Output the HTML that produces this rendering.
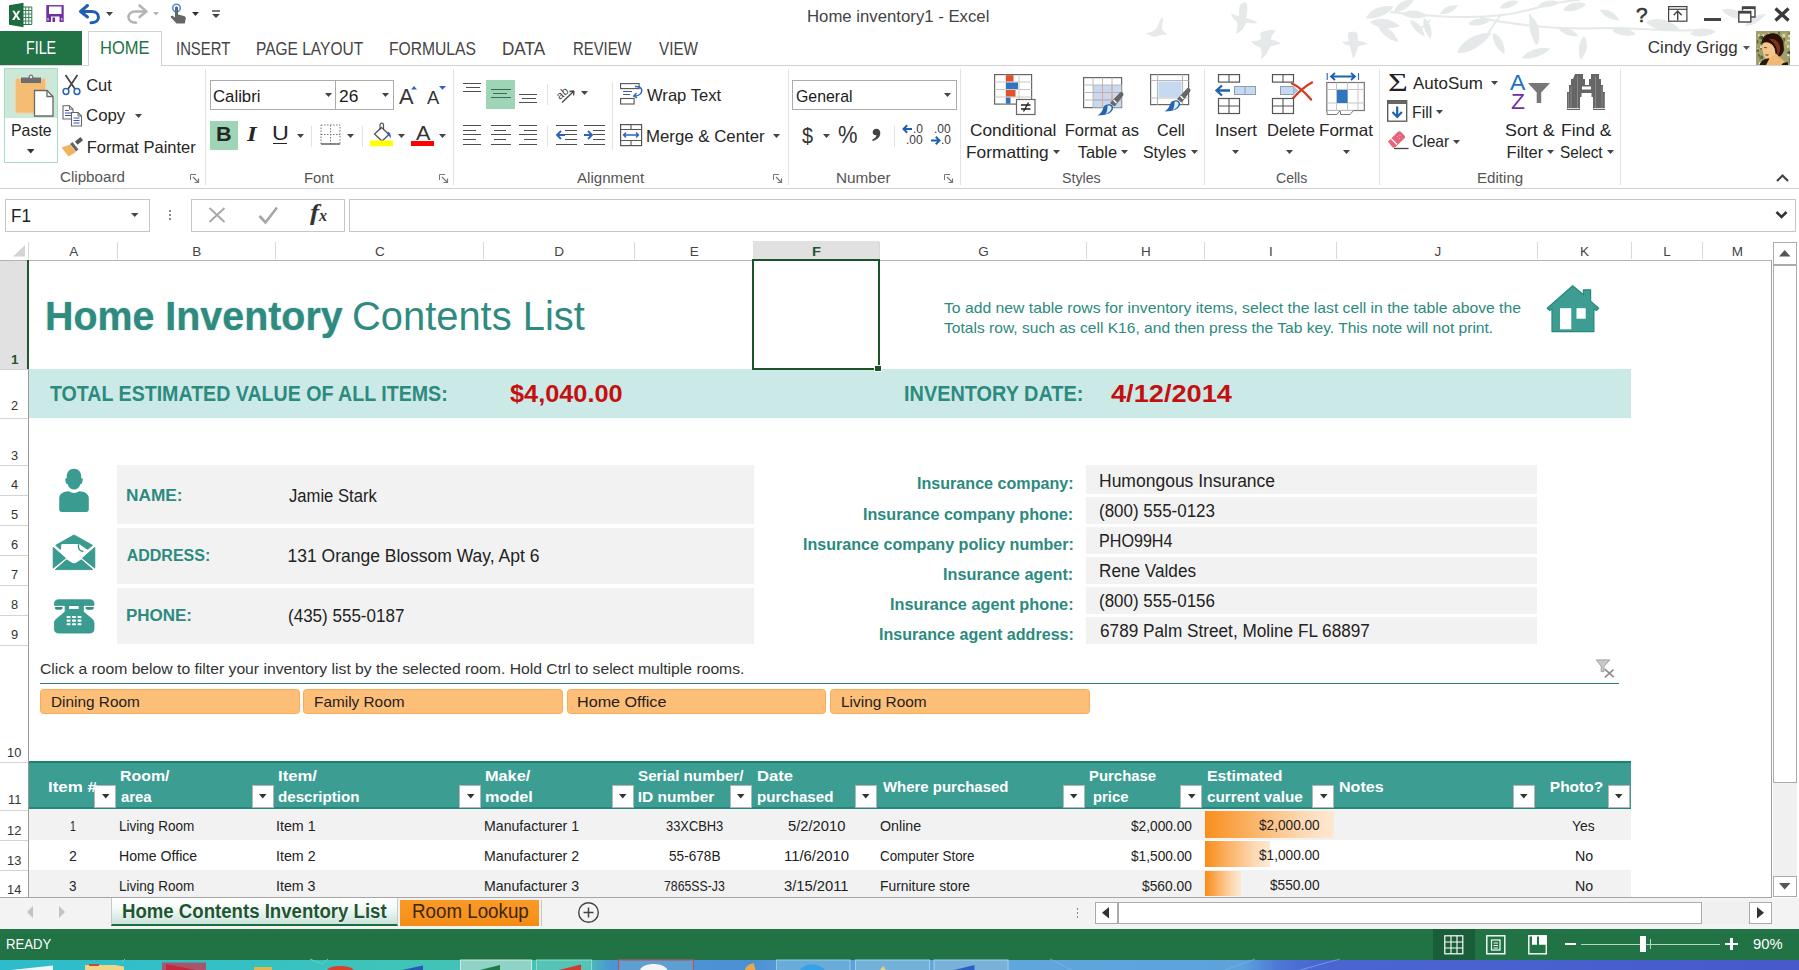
<!DOCTYPE html>
<html>
<head>
<meta charset="utf-8">
<title>Home inventory1 - Excel</title>
<style>
*{box-sizing:border-box;margin:0;padding:0}
html,body{width:1799px;height:970px;overflow:hidden;background:#fff}
body{font-family:"Liberation Sans",sans-serif;color:#262626;position:relative}
.a{position:absolute;display:block}
.t{position:absolute;white-space:nowrap;line-height:1;transform-origin:0 50%}
svg{overflow:visible}
</style>
</head>
<body>
<div class="a" style="left:0px;top:0px;width:1799px;height:66px;background:#fff;"></div>
<svg class="a" style="left:1100px;top:0px;overflow:hidden" width="699" height="66" viewBox="0 0 699 66"><g fill="#e6e9e9"><path d="M57 28c2-6 4-10 6-11c0 5-1 9-1 13c2 2 4 3 5 5c-3 0-6-1-9 1c-4 2-7 0-13-3c5 0 9-2 12-5z"/>
<path d="M140 5c3-3 6-4 7-1c1 4 0 10-1 14c3 1 8 2 12 5c-5 1-9 0-12 0c-2 5-5 9-10 11c1-5 2-9 1-12c-3-2-5-5-6-9c3 2 6 3 8 3c0-4 0-8 1-11z"/>
<path d="M160 33c5-3 12-4 16-2c-3 2-5 5-5 9c3 0 7 1 10 4c-4 1-8 1-11 3c-2 5-4 9-9 12c1-5 1-9-1-12c-4-1-7-3-9-6c4 0 8 0 10-2c0-2 0-4-1-6z"/>
<path d="M248 33c3-2 6-2 9 0c1 3 1 6 1 8c3 0 7 1 10 3c-4 1-7 1-10 2c-1 5-2 9-5 13c-1-5-2-9-3-13c-3-1-6-2-8-4c3 0 5-1 7-1c-1-3-1-5-1-8z"/><path transform="translate(266 18) rotate(-22)" d="M0 0C7.5 -7.0 21.0 -6.3 30 0C21.0 4.9 7.5 5.6 0 0z"/><path transform="translate(270 22) rotate(8)" d="M0 0C7.5 -7.0 21.0 -6.3 30 0C21.0 4.9 7.5 5.6 0 0z"/><path transform="translate(278 26) rotate(38)" d="M0 0C6.5 -6.0 18.2 -5.4 26 0C18.2 4.2 6.5 4.8 0 0z"/><path transform="translate(294 12) rotate(-32)" d="M0 0C6.0 -6.0 16.8 -5.4 24 0C16.8 4.2 6.0 4.8 0 0z"/><path transform="translate(302 14) rotate(4)" d="M0 0C6.5 -6.0 18.2 -5.4 26 0C18.2 4.2 6.5 4.8 0 0z"/><path transform="translate(310 20) rotate(48)" d="M0 0C5.5 -5.0 15.4 -4.5 22 0C15.4 3.5 5.5 4.0 0 0z"/><path transform="translate(324 18) rotate(72)" d="M0 0C5.5 -5.0 15.4 -4.5 22 0C15.4 3.5 5.5 4.0 0 0z"/><path transform="translate(357 53) rotate(-30)" d="M0 0C10.0 -9.0 28.0 -8.1 40 0C28.0 6.3 10.0 7.2 0 0z"/><path transform="translate(393 33) rotate(62)" d="M0 0C6.0 -6.0 16.8 -5.4 24 0C16.8 4.2 6.0 4.8 0 0z"/><path transform="translate(368 24) rotate(-8)" d="M0 0C5.5 -5.0 15.4 -4.5 22 0C15.4 3.5 5.5 4.0 0 0z"/><path transform="translate(340 14) rotate(-25)" d="M0 0C5.0 -5.0 14.0 -4.5 20 0C14.0 3.5 5.0 4.0 0 0z"/><path transform="translate(431 16) rotate(78)" d="M0 0C7.5 -7.0 21.0 -6.3 30 0C21.0 4.9 7.5 5.6 0 0z"/><path transform="translate(422 58) rotate(-18)" d="M0 0C7.5 -6.0 21.0 -5.4 30 0C21.0 4.2 7.5 4.8 0 0z"/><path transform="translate(458 28) rotate(22)" d="M0 0C5.5 -5.0 15.4 -4.5 22 0C15.4 3.5 5.5 4.0 0 0z"/><path transform="translate(484 36) rotate(98)" d="M0 0C6.0 -6.0 16.8 -5.4 24 0C16.8 4.2 6.0 4.8 0 0z"/><path transform="translate(463 10) rotate(-14)" d="M0 0C6.0 -6.0 16.8 -5.4 24 0C16.8 4.2 6.0 4.8 0 0z"/><path transform="translate(500 10) rotate(28)" d="M0 0C5.5 -5.0 15.4 -4.5 22 0C15.4 3.5 5.5 4.0 0 0z"/><path transform="translate(438 6) rotate(-10)" d="M0 0C5.5 -5.0 15.4 -4.5 22 0C15.4 3.5 5.5 4.0 0 0z"/><path transform="translate(400 8) rotate(-20)" d="M0 0C5.0 -5.0 14.0 -4.5 20 0C14.0 3.5 5.0 4.0 0 0z"/><path transform="translate(512 30) rotate(10)" d="M0 0C6.0 -6.0 16.8 -5.4 24 0C16.8 4.2 6.0 4.8 0 0z"/><path transform="translate(546 22) rotate(12)" d="M0 0C8.5 -8.0 23.8 -7.2 34 0C23.8 5.6 8.5 6.4 0 0z"/><path transform="translate(590 34) rotate(-5)" d="M0 0C6.5 -6.0 18.2 -5.4 26 0C18.2 4.2 6.5 4.8 0 0z"/><path transform="translate(622 10) rotate(20)" d="M0 0C6.5 -6.0 18.2 -5.4 26 0C18.2 4.2 6.5 4.8 0 0z"/><path transform="translate(645 26) rotate(-30)" d="M0 0C6.0 -5.0 16.8 -4.5 24 0C16.8 3.5 6.0 4.0 0 0z"/></g>
<g fill="none" stroke="#e6e9e9" stroke-width="2"><path d="M290 12c40 4 80 8 120 2c30-6 50-14 70-14M380 18c40 8 80 12 130 10c30 0 60 4 90 2M330 20c-4 6-8 8-14 10M400 16c-6 8-10 14-12 18M430 14c0 10 2 20 6 30"/></g></svg>
<div class="t" style="left:807.36px;top:8px;font-size:16.5px;color:#444;transform:scaleX(1.0148);">Home inventory1 - Excel</div>
<svg class="a" style="left:5px;top:2px;" width="28" height="26" viewBox="0 0 28 26"><path d="M17.500 5h9.300v17.500H17.500z" fill="#fff" stroke="#2a7a4d" stroke-width="1"/>
<path d="M17.500 8.500h9.300M17.500 12h9.300M17.500 15.500h9.300M17.500 19h9.300M20.700 5v17.500M23.800 5v17.500" stroke="#2a7a4d" stroke-width=".900"/>
<path d="M18.500 .800v24.400L4 22.700V3.300z" fill="#1d6b3f"/>
<path d="M7.300 8.800h2.300l1.700 3 1.700-3h2.300l-2.800 4.500 2.900 4.700h-2.400l-1.800-3.200-1.800 3.200H7l2.900-4.700z" fill="#fff"/></svg>
<svg class="a" style="left:45px;top:4px;" width="20" height="20" viewBox="0 0 20 20"><rect x="1.300" y="1.100" width="17.400" height="16.900" fill="#7030a0"/><rect x="4" y="2.500" width="12.500" height="7.500" fill="#fff"/><rect x="6" y="12.500" width="8.500" height="5.500" fill="#fff"/><rect x="7.500" y="13.500" width="2.600" height="4.500" fill="#7030a0"/><rect x="2.300" y="14" width="1.500" height="2.500" fill="#c9a8e0"/><rect x="16" y="14" width="1.500" height="2.500" fill="#c9a8e0"/></svg>
<svg class="a" style="left:78px;top:3px;" width="24" height="22" viewBox="0 0 24 22"><path d="M9.5 2.5L2.5 8.5l7 5.5" fill="none" stroke="#1e5fb4" stroke-width="3" stroke-linecap="round" stroke-linejoin="round"/><path d="M3.5 8.5h10c4.5 0 7 2.600 7 5.800s-3 5.400-7.500 5.400" fill="none" stroke="#1e5fb4" stroke-width="3" stroke-linecap="round"/></svg>
<svg class="a" style="left:105.50px;top:12.00px" width="7" height="4" viewBox="0 0 7 4"><path d="M0 0H7L3.5 4Z" fill="#444"/></svg>
<svg class="a" style="left:125px;top:3px;" width="24" height="22" viewBox="0 0 24 22"><path d="M14.500 2.500l7 6-7 5.500" fill="none" stroke="#b4b4b4" stroke-width="2.6" stroke-linecap="round" stroke-linejoin="round"/><path d="M20.500 8.500h-10c-4.500 0-7 2.600-7 5.800s3 5.400 7.500 5.400" fill="none" stroke="#b4b4b4" stroke-width="2.6" stroke-linecap="round"/></svg>
<svg class="a" style="left:153.00px;top:12.25px" width="6" height="3.5" viewBox="0 0 6 3.5"><path d="M0 0H6L3.0 3.5Z" fill="#b4b4b4"/></svg>
<svg class="a" style="left:167px;top:2px;" width="22" height="24" viewBox="0 0 22 24"><circle cx="9.500" cy="6" r="3.800" fill="none" stroke="#4a8fe0" stroke-width="1.600"/><path d="M8 5.500c0-1.200 3-1.200 3 0v7l6 1.500c1.500.400 2 1.500 1.700 3l-.9 4.500H9.500L4 15.500c-.8-1 .3-2.300 1.500-1.700L8 15.500z" fill="#666"/></svg>
<svg class="a" style="left:191.50px;top:12.00px" width="7" height="4" viewBox="0 0 7 4"><path d="M0 0H7L3.5 4Z" fill="#333"/></svg>
<svg class="a" style="left:211px;top:9px;" width="10" height="10" viewBox="0 0 10 10"><path d="M1 2h8" stroke="#444" stroke-width="1.400"/><path d="M1 5h8L5 9z" fill="#444"/></svg>
<div class="t" style="left:1636.07px;top:6px;font-size:19.5px;color:#3a3a3a;transform:scaleX(1.0684);-webkit-text-stroke:.600px #3a3a3a;">?</div>
<svg class="a" style="left:1668px;top:6px;" width="20" height="16" viewBox="0 0 20 16"><rect x=".600" y=".600" width="18.300" height="14.600" fill="#fff" stroke="#444" stroke-width="1.200"/><path d="M.600 3.300h18.300" stroke="#444" stroke-width="1.200"/><path d="M9.700 14.500V5M5.700 9.200L9.700 5l4 4.200" fill="none" stroke="#444" stroke-width="1.400"/></svg>
<div class="a" style="left:1704px;top:18px;width:17px;height:3px;background:#444;"></div>
<svg class="a" style="left:1738px;top:5.5px;" width="18" height="17" viewBox="0 0 18 17"><path d="M4.500 4.500V1h12.500v10H13" fill="none" stroke="#444" stroke-width="1.400"/><path d="M4.500 2h12.500" stroke="#444" stroke-width="2.200"/><rect x=".800" y="5.500" width="12" height="10.500" fill="#fff" stroke="#444" stroke-width="1.400"/><path d="M.800 6.500h12" stroke="#444" stroke-width="2.200"/></svg>
<svg class="a" style="left:1774px;top:7px;" width="16" height="15" viewBox="0 0 16 15"><path d="M1.500 1.500l13 12M14.500 1.500l-13 12" stroke="#3a3a3a" stroke-width="3.300"/></svg>
<div class="a" style="left:0px;top:65px;width:1799px;height:1px;background:#d2d2d2;"></div>
<div class="a" style="left:0px;top:31px;width:82px;height:34px;background:#217346;"></div>
<div class="a" style="left:88px;top:31px;width:74px;height:35px;background:#fff;border:1px solid #d2d2d2;border-bottom:none"></div>
<div class="t" style="left:25.96px;top:40px;font-size:17.5px;color:#fff;transform:scaleX(0.8126);">FILE</div>
<div class="t" style="left:99.88px;top:40px;font-size:17.5px;color:#217346;transform:scaleX(0.9425);">HOME</div>
<div class="t" style="left:175.76px;top:41px;font-size:17.5px;color:#444;transform:scaleX(0.8491);">INSERT</div>
<div class="t" style="left:255.86px;top:41px;font-size:17.5px;color:#444;transform:scaleX(0.8861);">PAGE LAYOUT</div>
<div class="t" style="left:389.15px;top:41px;font-size:17.5px;color:#444;transform:scaleX(0.8937);">FORMULAS</div>
<div class="t" style="left:502.33px;top:41px;font-size:17.5px;color:#444;transform:scaleX(0.9786);">DATA</div>
<div class="t" style="left:572.51px;top:41px;font-size:17.5px;color:#444;transform:scaleX(0.8486);">REVIEW</div>
<div class="t" style="left:658.70px;top:41px;font-size:17.5px;color:#444;transform:scaleX(0.8722);">VIEW</div>
<div class="t" style="left:1647.85px;top:39px;font-size:17px;color:#333;">Cindy Grigg</div>
<svg class="a" style="left:1743.00px;top:45.50px" width="7" height="4" viewBox="0 0 7 4"><path d="M0 0H7L3.5 4Z" fill="#555"/></svg>
<svg class="a" style="left:1756px;top:31px;overflow:hidden" width="34" height="34" viewBox="0 0 34 34"><rect width="34" height="34" fill="#a39f6c"/><rect x="10.7" y="5.0" width="1.3" height="2.8" fill="#2f5e2f"/><rect x="12.1" y="1.9" width="1.3" height="2.6" fill="#e8e0b4"/><rect x="2.3" y="3.0" width="1.3" height="2.9" fill="#f0ecd0"/><rect x="31.3" y="20.8" width="2.2" height="2.5" fill="#2f5e2f"/><rect x="32.2" y="1.5" width="1.7" height="1.9" fill="#6f7a45"/><rect x="3.9" y="10.2" width="1.4" height="2.9" fill="#6f7a45"/><rect x="6.2" y="3.2" width="2.2" height="3.0" fill="#d9d2a6"/><rect x="16.4" y="17.5" width="2.0" height="3.8" fill="#c2b77a"/><rect x="11.9" y="8.2" width="2.5" height="2.1" fill="#6f7a45"/><rect x="19.0" y="17.3" width="2.5" height="2.2" fill="#c2b77a"/><rect x="32.3" y="3.9" width="1.5" height="2.4" fill="#f0ecd0"/><rect x="30.8" y="13.9" width="2.6" height="2.9" fill="#d9d2a6"/><rect x="28.9" y="10.4" width="2.3" height="2.9" fill="#c2b77a"/><rect x="15.1" y="27.7" width="2.1" height="3.2" fill="#3f6a3a"/><rect x="2.0" y="23.1" width="1.7" height="2.5" fill="#59663a"/><rect x="22.1" y="0.7" width="1.8" height="3.0" fill="#59663a"/><rect x="16.3" y="7.2" width="1.4" height="2.1" fill="#3f6a3a"/><rect x="12.9" y="28.8" width="1.5" height="2.5" fill="#d9d2a6"/><rect x="9.2" y="4.5" width="2.8" height="2.2" fill="#f0ecd0"/><rect x="13.7" y="11.8" width="2.9" height="1.9" fill="#f0ecd0"/><rect x="5.8" y="7.7" width="1.2" height="3.6" fill="#e8e0b4"/><rect x="6.0" y="9.3" width="2.0" height="2.4" fill="#6f7a45"/><rect x="18.7" y="31.5" width="2.0" height="3.7" fill="#2f5e2f"/><rect x="31.4" y="22.5" width="1.9" height="2.5" fill="#f0ecd0"/><rect x="15.9" y="13.2" width="1.3" height="2.0" fill="#e8e0b4"/><rect x="5.4" y="11.2" width="1.4" height="2.9" fill="#2f5e2f"/><rect x="17.7" y="31.3" width="1.3" height="2.0" fill="#2f5e2f"/><rect x="12.4" y="20.9" width="2.3" height="2.7" fill="#c2b77a"/><rect x="3.8" y="16.1" width="2.1" height="2.3" fill="#59663a"/><rect x="4.8" y="24.7" width="2.1" height="3.2" fill="#3f6a3a"/><rect x="17.0" y="6.8" width="1.5" height="2.9" fill="#c2b77a"/><rect x="0.9" y="17.4" width="2.5" height="2.2" fill="#d9d2a6"/><rect x="12.1" y="5.5" width="2.2" height="3.4" fill="#e8e0b4"/><rect x="10.9" y="7.4" width="2.7" height="3.5" fill="#e8e0b4"/><rect x="24.4" y="7.5" width="1.8" height="1.6" fill="#59663a"/><rect x="0.9" y="9.2" width="1.5" height="3.0" fill="#3f6a3a"/><rect x="11.4" y="26.7" width="2.9" height="2.4" fill="#c2b77a"/><rect x="7.3" y="7.5" width="1.8" height="2.7" fill="#e8e0b4"/><rect x="32.5" y="20.1" width="2.1" height="3.1" fill="#2f5e2f"/><rect x="26.4" y="2.8" width="2.8" height="3.5" fill="#d9d2a6"/><rect x="24.8" y="15.8" width="2.0" height="3.1" fill="#6f7a45"/><rect x="2.9" y="31.2" width="2.0" height="3.4" fill="#f0ecd0"/><rect x="2.8" y="5.2" width="1.2" height="3.0" fill="#6f7a45"/><rect x="15.4" y="21.6" width="2.4" height="2.4" fill="#59663a"/><rect x="18.1" y="4.3" width="2.6" height="3.3" fill="#2f5e2f"/><rect x="3.4" y="24.7" width="2.0" height="3.7" fill="#6f7a45"/><rect x="27.3" y="7.0" width="1.6" height="2.8" fill="#3f6a3a"/><rect x="25.2" y="10.8" width="2.7" height="1.7" fill="#f0ecd0"/><rect x="24.4" y="29.6" width="2.7" height="3.7" fill="#f0ecd0"/><rect x="4.3" y="5.0" width="2.8" height="3.4" fill="#2f5e2f"/><rect x="20.1" y="25.6" width="1.5" height="2.7" fill="#6f7a45"/><rect x="23.9" y="18.4" width="2.4" height="2.8" fill="#c2b77a"/><rect x="15.9" y="25.6" width="1.6" height="2.2" fill="#2f5e2f"/><rect x="25.5" y="16.8" width="2.6" height="3.8" fill="#2f5e2f"/><rect x="14.6" y="20.2" width="2.4" height="2.6" fill="#e8e0b4"/><rect x="17.6" y="15.8" width="2.5" height="3.7" fill="#e8e0b4"/><rect x="31.1" y="8.6" width="2.7" height="1.8" fill="#e8e0b4"/><rect x="4.0" y="14.6" width="2.4" height="2.6" fill="#d9d2a6"/><rect x="7.0" y="10.0" width="2.8" height="1.9" fill="#d9d2a6"/><rect x="23.6" y="21.8" width="1.7" height="1.8" fill="#6f7a45"/><rect x="15.4" y="24.6" width="1.9" height="2.7" fill="#d9d2a6"/><rect x="32.7" y="27.5" width="2.5" height="4.0" fill="#6f7a45"/><rect x="13.3" y="13.9" width="1.8" height="3.3" fill="#c2b77a"/><rect x="0.6" y="18.3" width="2.5" height="2.5" fill="#59663a"/><rect x="17.1" y="9.7" width="1.4" height="3.8" fill="#d9d2a6"/><rect x="7.5" y="28.9" width="1.7" height="1.6" fill="#d9d2a6"/><rect x="25.7" y="8.9" width="2.7" height="3.6" fill="#6f7a45"/><rect x="22.3" y="31.2" width="1.5" height="3.8" fill="#f0ecd0"/><rect x="18.8" y="23.1" width="1.7" height="3.5" fill="#d9d2a6"/><rect x="6.1" y="29.5" width="2.9" height="3.1" fill="#3f6a3a"/>
<path d="M5.500 13.500C5 5 12 1.500 18 2.300c7 .900 9.500 7 9.700 13.200c.300 6-1.500 9-5.200 10.500L19 22c.500-7-5-12.500-13.500-8.500z" fill="#2b0f08"/>
<path d="M13 8c5-1 10 2 11 8c.500 4-.500 7-2.500 8.500c0-8-3-13-8.500-16.500z" fill="#7a351a"/>
<path d="M6.500 12.500c5-3.500 12 .500 12.800 8.500c.400 4-2 6.500-5.500 7c-3.500.500-5.500-1-6.300-4.500c-1-4-1.800-8-1-11z" fill="#f2c68c"/>
<path d="M8 16.500l3 .300M9.500 23.500c1 .800 2 .800 3 .300" stroke="#8a3a22" stroke-width="1.100" fill="none"/>
<path d="M13.500 27.500L20 22.500l4 4c3 3 6 4.500 7 7.500H8c.500-3 3.500-4.500 5.500-6.500z" fill="#f1b873"/>
<path d="M3.500 34c1-4 5-6.200 10-6.800L10 34zM25.500 34c1-2 3.500-3 6.500-2.500V34z" fill="#231812"/></svg>
<div class="a" style="left:0px;top:66px;width:1799px;height:122px;background:#fff;"></div>
<div class="a" style="left:0px;top:188px;width:1799px;height:1px;background:#d2d2d2;"></div>
<div class="a" style="left:0px;top:189px;width:1799px;height:52px;background:#fff;"></div>
<div class="a" style="left:205px;top:69px;width:1px;height:116px;background:#e2e2e2;"></div>
<div class="a" style="left:453px;top:69px;width:1px;height:116px;background:#e2e2e2;"></div>
<div class="a" style="left:788px;top:69px;width:1px;height:116px;background:#e2e2e2;"></div>
<div class="a" style="left:960px;top:69px;width:1px;height:116px;background:#e2e2e2;"></div>
<div class="a" style="left:1204px;top:69px;width:1px;height:116px;background:#e2e2e2;"></div>
<div class="a" style="left:1379px;top:69px;width:1px;height:116px;background:#e2e2e2;"></div>
<div class="a" style="left:1620px;top:69px;width:1px;height:116px;background:#e2e2e2;"></div>
<svg class="a" style="left:190px;top:173.5px;" width="9" height="9" viewBox="0 0 9 9"><path d="M.500 6V.500H6" fill="none" stroke="#777" stroke-width="1"/><path d="M3 3l5 5M8.500 4.500v4h-4" fill="none" stroke="#777" stroke-width="1.200"/></svg>
<svg class="a" style="left:438.5px;top:173.5px;" width="9" height="9" viewBox="0 0 9 9"><path d="M.500 6V.500H6" fill="none" stroke="#777" stroke-width="1"/><path d="M3 3l5 5M8.500 4.500v4h-4" fill="none" stroke="#777" stroke-width="1.200"/></svg>
<svg class="a" style="left:772.8px;top:173.5px;" width="9" height="9" viewBox="0 0 9 9"><path d="M.500 6V.500H6" fill="none" stroke="#777" stroke-width="1"/><path d="M3 3l5 5M8.500 4.500v4h-4" fill="none" stroke="#777" stroke-width="1.200"/></svg>
<svg class="a" style="left:944.1px;top:173.5px;" width="9" height="9" viewBox="0 0 9 9"><path d="M.500 6V.500H6" fill="none" stroke="#777" stroke-width="1"/><path d="M3 3l5 5M8.500 4.500v4h-4" fill="none" stroke="#777" stroke-width="1.200"/></svg>
<div class="t" style="left:59.94px;top:169px;font-size:15.5px;color:#555;transform:scaleX(0.9778);">Clipboard</div>
<div class="t" style="left:304.41px;top:170px;font-size:15.5px;color:#555;transform:scaleX(0.9577);">Font</div>
<div class="t" style="left:577.00px;top:170px;font-size:15.5px;color:#555;transform:scaleX(0.9739);">Alignment</div>
<div class="t" style="left:835.67px;top:170px;font-size:15.5px;color:#555;transform:scaleX(0.9887);">Number</div>
<div class="t" style="left:1062.46px;top:170px;font-size:15.5px;color:#555;transform:scaleX(0.9171);">Styles</div>
<div class="t" style="left:1276.30px;top:170px;font-size:15.5px;color:#555;transform:scaleX(0.9074);">Cells</div>
<div class="t" style="left:1477.49px;top:170px;font-size:15.5px;color:#555;transform:scaleX(0.9760);">Editing</div>
<svg class="a" style="left:1775px;top:172px;" width="15" height="11" viewBox="0 0 15 11"><path d="M2 9l5.500-5.500L13 9" fill="none" stroke="#444" stroke-width="2.200"/></svg>
<div class="a" style="left:4px;top:68px;width:54px;height:95px;border:1px solid #a9dcc0;background:#fff"></div>
<div class="a" style="left:5px;top:69px;width:52px;height:49px;background:#cbe8d8;"></div>
<svg class="a" style="left:14px;top:73px;" width="42" height="45" viewBox="0 0 42 45"><rect x="1.500" y="5.500" width="30" height="34.500" rx="1.500" fill="#f4bd73"/><rect x="1.500" y="5.500" width="30" height="34.500" rx="1.500" fill="none" stroke="#f8d19b" stroke-width="1"/>
<path d="M7 4.500h7.500c0-4 5-4 5 0H27V10H7z" fill="#6e6e6e"/><circle cx="17" cy="4" r="1.300" fill="#e8e8e8"/>
<path d="M20.500 17.500h12.500l6 6V43H20.500z" fill="#fff" stroke="#6a6a6a" stroke-width="1.300"/><path d="M33 17.500v6h6" fill="none" stroke="#6a6a6a" stroke-width="1.300"/></svg>
<div class="t" style="left:11.03px;top:122px;font-size:16.5px;color:#262626;transform:scaleX(0.9632);">Paste</div>
<svg class="a" style="left:26.55px;top:149.45px" width="7.5" height="4.5" viewBox="0 0 7.5 4.5"><path d="M0 0H7.5L3.75 4.5Z" fill="#333"/></svg>
<svg class="a" style="left:61px;top:74px;" width="21" height="22" viewBox="0 0 21 22"><path d="M4.500 1l9.500 14M16.500 1L7 15" stroke="#444" stroke-width="1.700" fill="none"/><circle cx="5" cy="17.500" r="2.900" fill="none" stroke="#2b63b8" stroke-width="1.500"/><circle cx="16" cy="17.500" r="2.900" fill="none" stroke="#2b63b8" stroke-width="1.500"/></svg>
<div class="t" style="left:86.17px;top:77px;font-size:16.5px;color:#262626;">Cut</div>
<svg class="a" style="left:62px;top:105px;" width="21" height="22" viewBox="0 0 21 22"><path d="M1 .700h6.500l3.500 3.500V14H1z" fill="#fff" stroke="#666" stroke-width="1.100"/><path d="M7.500 .700v3.500H11" fill="none" stroke="#666" stroke-width="1"/><path d="M3 5.500h4M3 8h6M3 10.500h6" stroke="#3b55b8" stroke-width="1.100"/>
<path d="M9.500 7.500h6.500l3.500 3.500V21H9.500z" fill="#fff" stroke="#666" stroke-width="1.100"/><path d="M16 7.500V11h3.500" fill="none" stroke="#666" stroke-width="1"/><path d="M11.500 13h6M11.500 15.500h6M11.500 18h6" stroke="#3b55b8" stroke-width="1.100"/></svg>
<div class="t" style="left:86.16px;top:107px;font-size:16.5px;color:#262626;transform:scaleX(1.0185);">Copy</div>
<svg class="a" style="left:134.70px;top:114.00px" width="7" height="4" viewBox="0 0 7 4"><path d="M0 0H7L3.5 4Z" fill="#444"/></svg>
<svg class="a" style="left:61px;top:136px;" width="23" height="21" viewBox="0 0 23 21"><path d="M14 5.500l5.500-4.500 2.500 3.200-5.500 4.500z" fill="#555"/><path d="M11.500 6l6 7.500-2.500 2-6-7.500z" fill="#666"/><path d="M9 8.500l6 7.500-7.500 4.500L.500 11.500z" fill="#f0b45e"/></svg>
<div class="t" style="left:86.68px;top:139px;font-size:16.5px;color:#262626;">Format Painter</div>
<div class="a" style="left:210px;top:80px;width:126px;height:30px;border:1px solid #ababab;background:#fff"></div>
<div class="a" style="left:335px;top:80px;width:59px;height:30px;border:1px solid #ababab;background:#fff"></div>
<div class="t" style="left:212.56px;top:88px;font-size:17px;color:#1a1a1a;transform:scaleX(0.9858);">Calibri</div>
<svg class="a" style="left:324.90px;top:92.80px" width="7" height="4" viewBox="0 0 7 4"><path d="M0 0H7L3.5 4Z" fill="#444"/></svg>
<div class="t" style="left:339.03px;top:88px;font-size:17px;color:#1a1a1a;transform:scaleX(1.0208);">26</div>
<svg class="a" style="left:382.00px;top:92.80px" width="7" height="4" viewBox="0 0 7 4"><path d="M0 0H7L3.5 4Z" fill="#444"/></svg>
<div class="t" style="left:399.10px;top:87px;font-size:21.5px;color:#333;transform:scaleX(1.0142);">A</div>
<svg class="a" style="left:411px;top:85.5px;" width="6" height="4" viewBox="0 0 6 4"><path d="M0 3.500L3 0l3 3.500z" fill="#2b63b8"/></svg>
<div class="t" style="left:427.40px;top:90px;font-size:17.5px;color:#333;transform:scaleX(1.0483);">A</div>
<svg class="a" style="left:438.5px;top:85.5px;" width="7" height="4" viewBox="0 0 7 4"><path d="M0 0h7L3.500 3.700z" fill="#2b63b8"/></svg>
<div class="a" style="left:210px;top:121px;width:28px;height:29px;background:#9fd5b7;"></div>
<div class="t" style="left:216.29px;top:124px;font-size:20.5px;color:#262626;font-weight:bold;transform:scaleX(1.0549);">B</div>
<div class="t" style="left:246.65px;top:124px;font-size:21px;color:#262626;font-weight:bold;font-style:italic;font-family:'Liberation Serif',serif;transform:scaleX(1.1849);">I</div>
<div class="t" style="left:271.65px;top:124px;font-size:19.5px;color:#262626;transform:scaleX(1.1966);">U</div>
<div class="a" style="left:272.5px;top:142.5px;width:14.5px;height:1.5px;background:#262626;"></div>
<svg class="a" style="left:296.90px;top:133.60px" width="7" height="4" viewBox="0 0 7 4"><path d="M0 0H7L3.5 4Z" fill="#444"/></svg>
<div class="a" style="left:311px;top:126px;width:1px;height:21px;background:#e2e2e2;"></div>
<svg class="a" style="left:320px;top:124px;" width="21" height="21" viewBox="0 0 21 21"><rect x="1" y="1" width="19" height="19" fill="none" stroke="#777" stroke-width="1" stroke-dasharray="1.500 1.500"/><path d="M10.500 1v19M1 10.500h19" stroke="#777" stroke-width="1" stroke-dasharray="1.500 1.500"/><path d="M1 20h19" stroke="#666" stroke-width="1.400"/></svg>
<svg class="a" style="left:347.40px;top:133.60px" width="7" height="4" viewBox="0 0 7 4"><path d="M0 0H7L3.5 4Z" fill="#444"/></svg>
<div class="a" style="left:362px;top:126px;width:1px;height:21px;background:#e2e2e2;"></div>
<svg class="a" style="left:370px;top:122px;" width="24" height="25" viewBox="0 0 24 25"><path d="M11.500 5.500l7.500 7-7 6.500-7.500-7z" fill="#fff" stroke="#555" stroke-width="1.300"/><path d="M10 8V3c0-2.500 3.500-2.500 3.500 0v4" fill="none" stroke="#555" stroke-width="1.200"/><path d="M18 9.500c2.500 1.500 3.500 4 2.500 7c-1-2-1.700-3.500-3.500-4.500z" fill="#2b63b8"/><rect x="0" y="18.500" width="23" height="5.700" fill="#ffff00"/></svg>
<svg class="a" style="left:398.10px;top:133.60px" width="7" height="4" viewBox="0 0 7 4"><path d="M0 0H7L3.5 4Z" fill="#444"/></svg>
<div class="t" style="left:415.80px;top:123px;font-size:20px;color:#333;transform:scaleX(1.0827);">A</div>
<div class="a" style="left:411px;top:140.5px;width:23px;height:5.7px;background:#ff0000;"></div>
<svg class="a" style="left:438.90px;top:133.60px" width="7" height="4" viewBox="0 0 7 4"><path d="M0 0H7L3.5 4Z" fill="#444"/></svg>
<div class="a" style="left:463px;top:83px;width:18px;height:1px;background:#4f4f4f;"></div>
<div class="a" style="left:466px;top:87px;width:14px;height:1px;background:#4f4f4f;"></div>
<div class="a" style="left:463px;top:91px;width:18px;height:1px;background:#4f4f4f;"></div>
<div class="a" style="left:486px;top:80px;width:28.5px;height:29px;background:#9fd5b7;"></div>
<div class="a" style="left:491px;top:89px;width:20px;height:1px;background:#3d6b50;"></div>
<div class="a" style="left:493px;top:93px;width:14px;height:1px;background:#3d6b50;"></div>
<div class="a" style="left:491px;top:97px;width:20px;height:1px;background:#3d6b50;"></div>
<div class="a" style="left:519px;top:94px;width:18px;height:1px;background:#4f4f4f;"></div>
<div class="a" style="left:522px;top:98px;width:14px;height:1px;background:#4f4f4f;"></div>
<div class="a" style="left:519px;top:102px;width:18px;height:1px;background:#4f4f4f;"></div>
<div class="a" style="left:546.5px;top:84px;width:1px;height:21px;background:#e2e2e2;"></div>
<svg class="a" style="left:556px;top:85px;" width="21" height="19" viewBox="0 0 21 19"><text x="1" y="11" font-family="Liberation Sans" font-size="11" fill="#444" transform="rotate(-38 8 9)">ab</text><path d="M6 17.500L18 6M18 6l-4.500.500M18 6l-.500 4.500" fill="none" stroke="#444" stroke-width="1.300"/></svg>
<svg class="a" style="left:580.70px;top:91.30px" width="7" height="4" viewBox="0 0 7 4"><path d="M0 0H7L3.5 4Z" fill="#444"/></svg>
<div class="a" style="left:612px;top:82px;width:1px;height:68px;background:#e2e2e2;"></div>
<svg class="a" style="left:620px;top:83px;" width="24" height="23" viewBox="0 0 24 23"><rect x=".600" y=".600" width="18.500" height="5" fill="#fff" stroke="#555" stroke-width="1.100"/><rect x=".600" y="15.500" width="13.500" height="5.500" fill="#fff" stroke="#555" stroke-width="1.100"/><path d="M3 8.500h9M3 11.500h7" stroke="#3b55b8" stroke-width="1.200"/><path d="M15 3.500c6-.500 8 3 6 6.500c-1.500 2.500-4 3-7 3M16.500 10l-2.800 3 3.300 2" fill="none" stroke="#2b63b8" stroke-width="1.400"/></svg>
<div class="t" style="left:647.00px;top:87px;font-size:16.5px;color:#262626;transform:scaleX(1.0056);">Wrap Text</div>
<div class="a" style="left:463px;top:125px;width:18px;height:1px;background:#4f4f4f;"></div>
<div class="a" style="left:463px;top:130px;width:13px;height:1px;background:#4f4f4f;"></div>
<div class="a" style="left:463px;top:134px;width:18px;height:1px;background:#4f4f4f;"></div>
<div class="a" style="left:463px;top:139px;width:13px;height:1px;background:#4f4f4f;"></div>
<div class="a" style="left:463px;top:144px;width:18px;height:1px;background:#4f4f4f;"></div>
<div class="a" style="left:491px;top:125px;width:20px;height:1px;background:#4f4f4f;"></div>
<div class="a" style="left:494px;top:130px;width:12px;height:1px;background:#4f4f4f;"></div>
<div class="a" style="left:491px;top:134px;width:20px;height:1px;background:#4f4f4f;"></div>
<div class="a" style="left:494px;top:139px;width:12px;height:1px;background:#4f4f4f;"></div>
<div class="a" style="left:491px;top:144px;width:20px;height:1px;background:#4f4f4f;"></div>
<div class="a" style="left:519px;top:125px;width:18px;height:1px;background:#4f4f4f;"></div>
<div class="a" style="left:524px;top:130px;width:13px;height:1px;background:#4f4f4f;"></div>
<div class="a" style="left:519px;top:134px;width:18px;height:1px;background:#4f4f4f;"></div>
<div class="a" style="left:524px;top:139px;width:13px;height:1px;background:#4f4f4f;"></div>
<div class="a" style="left:519px;top:144px;width:18px;height:1px;background:#4f4f4f;"></div>
<div class="a" style="left:546.5px;top:126px;width:1px;height:21px;background:#e2e2e2;"></div>
<div class="a" style="left:556px;top:125px;width:21px;height:1px;background:#4f4f4f;"></div>
<div class="a" style="left:565px;top:130px;width:12px;height:1px;background:#4f4f4f;"></div>
<div class="a" style="left:565px;top:134px;width:12px;height:1px;background:#4f4f4f;"></div>
<div class="a" style="left:565px;top:139px;width:12px;height:1px;background:#4f4f4f;"></div>
<div class="a" style="left:556px;top:144px;width:21px;height:1px;background:#4f4f4f;"></div>
<svg class="a" style="left:555.5px;top:130px;" width="9" height="10" viewBox="0 0 9 10"><path d="M9 5H1.500M5 1L1 5l4 4" fill="none" stroke="#2b63b8" stroke-width="1.800"/></svg>
<div class="a" style="left:584px;top:125px;width:21px;height:1px;background:#4f4f4f;"></div>
<div class="a" style="left:593px;top:130px;width:12px;height:1px;background:#4f4f4f;"></div>
<div class="a" style="left:593px;top:134px;width:12px;height:1px;background:#4f4f4f;"></div>
<div class="a" style="left:593px;top:139px;width:12px;height:1px;background:#4f4f4f;"></div>
<div class="a" style="left:584px;top:144px;width:21px;height:1px;background:#4f4f4f;"></div>
<svg class="a" style="left:583.6px;top:130px;" width="9" height="10" viewBox="0 0 9 10"><path d="M0 5h7.500M4 1l4 4-4 4" fill="none" stroke="#2b63b8" stroke-width="1.800"/></svg>
<svg class="a" style="left:620px;top:124px;" width="23" height="23" viewBox="0 0 23 23"><rect x=".600" y=".600" width="21" height="21" fill="#fff" stroke="#555" stroke-width="1.200"/><path d="M.600 5.500h21M.600 16.500h21M11 .600v5M11 16.500v5" stroke="#555" stroke-width="1.100"/><path d="M3.500 11h15M6 8.500L3.500 11 6 13.500M16 8.500l2.500 2.500-2.500 2.500" fill="none" stroke="#2b63b8" stroke-width="1.300"/></svg>
<div class="t" style="left:645.65px;top:128px;font-size:16.5px;color:#262626;transform:scaleX(1.0189);">Merge &amp; Center</div>
<svg class="a" style="left:773.30px;top:134.40px" width="7" height="4" viewBox="0 0 7 4"><path d="M0 0H7L3.5 4Z" fill="#444"/></svg>
<div class="a" style="left:792px;top:80px;width:165px;height:30px;border:1px solid #ababab;background:#fff"></div>
<div class="t" style="left:795.61px;top:88px;font-size:17px;color:#1a1a1a;transform:scaleX(0.9340);">General</div>
<svg class="a" style="left:944.30px;top:92.70px" width="7" height="4" viewBox="0 0 7 4"><path d="M0 0H7L3.5 4Z" fill="#444"/></svg>
<div class="t" style="left:802.00px;top:125px;font-size:22.5px;color:#333;transform:scaleX(0.8806);">$</div>
<svg class="a" style="left:823.30px;top:133.60px" width="7" height="4" viewBox="0 0 7 4"><path d="M0 0H7L3.5 4Z" fill="#444"/></svg>
<div class="t" style="left:838.13px;top:124px;font-size:23px;color:#333;transform:scaleX(0.9544);">%</div>
<svg class="a" style="left:871px;top:127.5px;" width="10" height="14" viewBox="0 0 10 14"><path d="M5.500 .800c2.300 0 3.800 1.700 3.800 4.200c0 3.800-2.800 6.800-7.600 8l-.600-1.300c2.600-1 4.200-2.600 4.400-4.400c-2.200.300-3.800-1-3.800-3c0-2 1.600-3.500 3.800-3.500z" fill="#444"/></svg>
<div class="a" style="left:894px;top:126px;width:1px;height:21px;background:#e2e2e2;"></div>
<svg class="a" style="left:902px;top:123px;" width="23" height="23" viewBox="0 0 23 23"><path d="M10 6H2M5.200 2.300L1.500 6l3.700 3.700" fill="none" stroke="#1e5fb4" stroke-width="2"/><text x="11" y="10" font-family="Liberation Sans" font-size="12" fill="#3a3a3a">.0</text><text x="4" y="21.400" font-family="Liberation Sans" font-size="12" fill="#3a3a3a">.00</text></svg>
<svg class="a" style="left:930px;top:123px;" width="23" height="23" viewBox="0 0 23 23"><text x="4" y="10" font-family="Liberation Sans" font-size="12" fill="#3a3a3a">.00</text><path d="M1 17.500h8M5.800 13.800l3.700 3.700-3.700 3.700" fill="none" stroke="#1e5fb4" stroke-width="2"/><text x="11" y="21.400" font-family="Liberation Sans" font-size="12" fill="#3a3a3a">.0</text></svg>
<svg class="a" style="left:994px;top:74px;" width="43" height="42" viewBox="0 0 43 42"><rect x=".600" y=".600" width="37" height="29.500" fill="#fff" stroke="#666" stroke-width="1.200"/>
<path d="M.600 8h37M.600 15.500h37M.600 23h37M12 .600v29.500M25 .600v29.500" stroke="#c9c9c9" stroke-width="1"/>
<rect x="12" y="1.200" width="7.500" height="6.300" fill="#e2512c"/><rect x="12" y="8.500" width="12" height="6.500" fill="#2f75c0"/><rect x="12" y="16" width="9.500" height="6.500" fill="#e2512c"/><rect x="12" y="23.500" width="4.500" height="6.200" fill="#2f75c0"/>
<rect x="22.500" y="25.500" width="18.500" height="15" fill="#fff" stroke="#666" stroke-width="1.200"/><path d="M27 31h9.500M27 35h9.500M34.500 28.500l-5 9" stroke="#222" stroke-width="1.300"/></svg>
<div class="t" style="left:970.44px;top:122px;font-size:16.5px;color:#262626;transform:scaleX(1.0473);">Conditional</div>
<div class="t" style="left:965.92px;top:144px;font-size:16.5px;color:#262626;transform:scaleX(1.0489);">Formatting</div>
<svg class="a" style="left:1053.00px;top:150.00px" width="7" height="4" viewBox="0 0 7 4"><path d="M0 0H7L3.5 4Z" fill="#444"/></svg>
<svg class="a" style="left:1083px;top:77px;" width="44" height="40" viewBox="0 0 44 40"><rect x=".600" y=".600" width="38" height="30" fill="#fff" stroke="#666" stroke-width="1.200"/><rect x="10" y="8" width="28.500" height="22.500" fill="#c5d9f1"/>
<path d="M.600 8h38M.600 15.500h38M.600 23h38M10 .600v30M19.500 .600v30M29 .600v30" stroke="#b9b9b9" stroke-width="1"/><path d="M10 15.500h28M10 23h28M19.500 8v22M29 8v22" stroke="#d9a79a" stroke-width="1"/><path d="M27 26l10-10.500c1.500-1.500 4.500.800 3.200 3l-8.500 11z" fill="#666"/><path d="M30.5 23l3 3" stroke="#fff" stroke-width="1.500"/><path d="M24.5 27.5c3-1 6 1 5.500 4c-.500 4-6 7-15.500 7c3-2 5-4.500 5.500-7c.500-2.500 2-3.500 4.500-4z" fill="#2565b0"/><path d="M24.5 29c2-1 4.500 0 4 2.500c-.500 2.500-3 4.500-6 5.500c1.500-2 2-4.500 2-8z" fill="#dfeaf7"/></svg>
<div class="t" style="left:1064.68px;top:122px;font-size:16.5px;color:#262626;">Format as</div>
<div class="t" style="left:1077.67px;top:144px;font-size:16.5px;color:#262626;">Table</div>
<svg class="a" style="left:1120.80px;top:150.00px" width="7" height="4" viewBox="0 0 7 4"><path d="M0 0H7L3.5 4Z" fill="#444"/></svg>
<svg class="a" style="left:1150px;top:74px;" width="44" height="41" viewBox="0 0 44 41"><rect x=".600" y=".600" width="38" height="30" fill="#fff" stroke="#666" stroke-width="1.200"/><path d="M.600 6.500h38M.600 24h38M7.500 .600v30M32.500 .600v30" stroke="#b9b9b9" stroke-width="1.200"/><rect x="8.500" y="7.500" width="23" height="15.500" fill="#c5d9f1"/><path d="M27 25l10-10.500c1.500-1.500 4.500.800 3.200 3l-8.500 11z" fill="#666"/><path d="M30.5 22l3 3" stroke="#fff" stroke-width="1.500"/><path d="M24.5 26.5c3-1 6 1 5.500 4c-.500 4-6 7-15.500 7c3-2 5-4.500 5.500-7c.500-2.500 2-3.500 4.500-4z" fill="#2565b0"/><path d="M24.5 28c2-1 4.500 0 4 2.500c-.500 2.500-3 4.500-6 5.500c1.500-2 2-4.500 2-8z" fill="#dfeaf7"/></svg>
<div class="t" style="left:1156.89px;top:122px;font-size:16.5px;color:#262626;transform:scaleX(0.9825);">Cell</div>
<div class="t" style="left:1143.29px;top:144px;font-size:16.5px;color:#262626;transform:scaleX(0.9601);">Styles</div>
<svg class="a" style="left:1190.70px;top:150.00px" width="7" height="4" viewBox="0 0 7 4"><path d="M0 0H7L3.5 4Z" fill="#444"/></svg>
<svg class="a" style="left:1214px;top:73px;" width="44" height="43" viewBox="0 0 44 43"><rect x="4.500" y="1.600" width="21" height="7.500" fill="#fff" stroke="#555" stroke-width="1.200"/><path d="M15 1.600v7.500" stroke="#555" stroke-width="1.100"/>
<rect x="20.500" y="13.500" width="21" height="8" fill="#c5d9f1" stroke="#8d9db5" stroke-width="1"/><path d="M31 13.500v8" stroke="#8d9db5" stroke-width="1"/>
<path d="M16 17.500H3M8 12.500l-5.500 5 5.500 5" fill="none" stroke="#1e63b0" stroke-width="2.300"/><rect x="4.5" y="25.5" width="21" height="15" fill="#fff" stroke="#555" stroke-width="1.200"/><path d="M15 25.5v15M4.5 33h21" stroke="#555" stroke-width="1.100"/></svg>
<div class="t" style="left:1215.09px;top:122px;font-size:16.5px;color:#262626;transform:scaleX(1.0185);">Insert</div>
<svg class="a" style="left:1232.00px;top:150.00px" width="7" height="4" viewBox="0 0 7 4"><path d="M0 0H7L3.5 4Z" fill="#444"/></svg>
<svg class="a" style="left:1268px;top:73px;" width="46" height="43" viewBox="0 0 46 43"><rect x="4.500" y="1.600" width="21" height="7.500" fill="#fff" stroke="#555" stroke-width="1.200"/><path d="M15 1.600v7.500" stroke="#555" stroke-width="1.100"/>
<rect x="12.500" y="13.500" width="13" height="8" fill="#c5d9f1" stroke="#8d9db5" stroke-width="1"/><path d="M25.500 13l5 4.500-5 4.500z" fill="#a9c4e6"/>
<path d="M24 10.500c7 3 13 9 19 16M44 9.500c-8 4-14 10-20.500 17.500" fill="none" stroke="#d83b1e" stroke-width="2.400" stroke-linecap="round"/><rect x="4.5" y="25.5" width="21" height="15" fill="#fff" stroke="#555" stroke-width="1.200"/><path d="M15 25.5v15M4.5 33h21" stroke="#555" stroke-width="1.100"/></svg>
<div class="t" style="left:1266.67px;top:122px;font-size:16.5px;color:#262626;transform:scaleX(1.0043);">Delete</div>
<svg class="a" style="left:1286.20px;top:150.00px" width="7" height="4" viewBox="0 0 7 4"><path d="M0 0H7L3.5 4Z" fill="#444"/></svg>
<svg class="a" style="left:1326px;top:72px;" width="40" height="44" viewBox="0 0 40 44"><path d="M1.200 1v7M32.500 1v7" stroke="#3b55b8" stroke-width="1.100"/><path d="M5 4.500h24M9 1L5 4.500 9 8M25 1l4 3.500-4 3.500" fill="none" stroke="#1e63b0" stroke-width="1.800"/>
<rect x=".800" y="10.500" width="37.500" height="28" fill="#fff" stroke="#777" stroke-width="1.200"/><path d="M.800 17.500h37.500M.800 31h37.500M10.500 10.500v28M21.500 10.500v28M32 10.500v28" stroke="#c4c4c4" stroke-width="1"/>
<rect x="11" y="18" width="10.500" height="13" fill="#2f75c0"/><path d="M1 38.500v4h10l2-3h1.500v3H24l3.500-4" fill="#fff" stroke="#777" stroke-width="1"/></svg>
<div class="t" style="left:1319.24px;top:122px;font-size:16.5px;color:#262626;transform:scaleX(1.0314);">Format</div>
<svg class="a" style="left:1342.50px;top:150.00px" width="7" height="4" viewBox="0 0 7 4"><path d="M0 0H7L3.5 4Z" fill="#444"/></svg>
<div class="t" style="left:1388.21px;top:70px;font-size:25px;color:#222;font-family:'Liberation Serif',serif;transform:scaleX(1.3600);">Σ</div>
<div class="t" style="left:1412.90px;top:75px;font-size:16.5px;color:#262626;transform:scaleX(1.0281);">AutoSum</div>
<svg class="a" style="left:1491.40px;top:81.00px" width="7" height="4" viewBox="0 0 7 4"><path d="M0 0H7L3.5 4Z" fill="#444"/></svg>
<svg class="a" style="left:1387px;top:100px;" width="21" height="22" viewBox="0 0 21 22"><rect x=".700" y=".700" width="19" height="20.500" fill="#fff" stroke="#555" stroke-width="1.300"/><rect x=".700" y=".700" width="19" height="3.300" fill="#666"/><path d="M10.200 6.500v10M5.500 12l4.700 5 4.700-5" fill="none" stroke="#1e63b0" stroke-width="2.200"/></svg>
<div class="t" style="left:1412.33px;top:104px;font-size:16.5px;color:#262626;transform:scaleX(0.9612);">Fill</div>
<svg class="a" style="left:1436.30px;top:109.80px" width="7" height="4" viewBox="0 0 7 4"><path d="M0 0H7L3.5 4Z" fill="#444"/></svg>
<svg class="a" style="left:1387px;top:130px;" width="23" height="20" viewBox="0 0 23 20"><path d="M1 11.500L11 1.800c.800-.800 2-.800 2.800 0l3.700 3.700c.800.800.800 2 0 2.800L8 17.500H5.500z" fill="#e8647a"/><path d="M4 8.500l6 6" stroke="#fff" stroke-width="1.200"/><path d="M7 18.500h14.500" stroke="#444" stroke-width="1.300"/><path d="M10 6l1 1M12 8l1 1M12.500 5l1 1" stroke="#f6b8c2" stroke-width="1"/></svg>
<div class="t" style="left:1412.12px;top:133px;font-size:16.5px;color:#262626;transform:scaleX(0.9436);">Clear</div>
<svg class="a" style="left:1453.20px;top:139.60px" width="7" height="4" viewBox="0 0 7 4"><path d="M0 0H7L3.5 4Z" fill="#444"/></svg>
<div class="t" style="left:1510.40px;top:72px;font-size:22px;color:#1e6fbe;transform:scaleX(1.0458);">A</div>
<div class="t" style="left:1510.91px;top:91px;font-size:22px;color:#7030a0;transform:scaleX(1.0413);">Z</div>
<svg class="a" style="left:1527px;top:82px;" width="24" height="23" viewBox="0 0 24 23"><path d="M1 1h22L14.200 10.500V21h-4.500V10.500z" fill="#777"/></svg>
<div class="t" style="left:1505.30px;top:122px;font-size:16.5px;color:#262626;transform:scaleX(1.0807);">Sort &amp;</div>
<div class="t" style="left:1506.58px;top:144px;font-size:16.5px;color:#262626;">Filter</div>
<svg class="a" style="left:1546.70px;top:150.00px" width="7" height="4" viewBox="0 0 7 4"><path d="M0 0H7L3.5 4Z" fill="#444"/></svg>
<svg class="a" style="left:1566px;top:73px;" width="41" height="38" viewBox="0 0 41 38"><path d="M9 1h8v5h2v6h4V6h2V1h8v5h2v6h2v7h2v18H27V24h-1.500v-4h-10v4H14v13H1V19h2v-7h2V6h2z" fill="#666"/><path d="M16 13.500h9v3h-9z" fill="#fff"/><path d="M2.500 20v15M5 14v21M11.500 3v32M29.500 3v32M36 14v21M38.500 20v15" stroke="#888" stroke-width="1"/><path d="M1.500 35.500h12M27.500 35.500h12" stroke="#fff" stroke-width=".800"/></svg>
<div class="t" style="left:1561.41px;top:122px;font-size:16.5px;color:#262626;transform:scaleX(1.0563);">Find &amp;</div>
<div class="t" style="left:1559.71px;top:144px;font-size:16.5px;color:#262626;transform:scaleX(0.9280);">Select</div>
<svg class="a" style="left:1606.50px;top:150.00px" width="7" height="4" viewBox="0 0 7 4"><path d="M0 0H7L3.5 4Z" fill="#444"/></svg>
<div class="a" style="left:5px;top:198.5px;width:144.5px;height:33.5px;border:1px solid #c6c6c6;background:#fff"></div>
<div class="a" style="left:191px;top:198.5px;width:154px;height:33.5px;border:1px solid #c6c6c6;background:#fff"></div>
<div class="a" style="left:348.5px;top:198.5px;width:1447px;height:33.5px;border:1px solid #c6c6c6;background:#fff"></div>
<div class="t" style="left:11.23px;top:208px;font-size:17.5px;color:#222;transform:scaleX(0.9780);">F1</div>
<svg class="a" style="left:130.75px;top:212.90px" width="7.5" height="4" viewBox="0 0 7.5 4"><path d="M0 0H7.5L3.75 4Z" fill="#444"/></svg>
<div class="a" style="left:168.5px;top:210.3px;width:2px;height:2px;background:#8a8a8a;"></div>
<div class="a" style="left:168.5px;top:214px;width:2px;height:2px;background:#8a8a8a;"></div>
<div class="a" style="left:168.5px;top:217.7px;width:2px;height:2px;background:#8a8a8a;"></div>
<svg class="a" style="left:208px;top:207px;" width="18" height="16" viewBox="0 0 18 16"><path d="M1.500 1l15 14M16.500 1l-15 14" stroke="#a6a6a6" stroke-width="1.800"/></svg>
<svg class="a" style="left:258px;top:206px;" width="21" height="18" viewBox="0 0 21 18"><path d="M1.500 10l6 6.500L19 1.500" fill="none" stroke="#a6a6a6" stroke-width="2.600"/></svg>
<div class="t" style="left:309.90px;top:200px;font-size:24px;color:#333;font-weight:bold;font-style:italic;font-family:'Liberation Serif',serif;transform:scaleX(1.1409);">f</div>
<div class="t" style="left:319.44px;top:207px;font-size:17px;color:#333;font-weight:bold;font-style:italic;font-family:'Liberation Serif',serif;transform:scaleX(0.9507);">x</div>
<svg class="a" style="left:1775px;top:210px;" width="13" height="10" viewBox="0 0 13 10"><path d="M1.500 2l5 5 5-5" fill="none" stroke="#333" stroke-width="2.600"/></svg>
<div class="a" style="left:0px;top:241px;width:1771px;height:19px;background:#fff;"></div>
<div class="t" style="left:69.21px;top:245px;font-size:13.5px;color:#444;">A</div>
<div class="a" style="left:116.5px;top:242px;width:1px;height:17px;background:#d9d9d9;"></div>
<div class="t" style="left:192.21px;top:245px;font-size:13.5px;color:#444;">B</div>
<div class="a" style="left:274.5px;top:242px;width:1px;height:17px;background:#d9d9d9;"></div>
<div class="t" style="left:374.94px;top:245px;font-size:13.5px;color:#444;">C</div>
<div class="a" style="left:482.5px;top:242px;width:1px;height:17px;background:#d9d9d9;"></div>
<div class="t" style="left:554.30px;top:245px;font-size:13.5px;color:#444;">D</div>
<div class="a" style="left:633.5px;top:242px;width:1px;height:17px;background:#d9d9d9;"></div>
<div class="t" style="left:689.64px;top:245px;font-size:13.5px;color:#444;">E</div>
<div class="a" style="left:752.5px;top:242px;width:1px;height:17px;background:#d9d9d9;"></div>
<div class="a" style="left:753px;top:241px;width:125.7px;height:18px;background:#e1e1e1;"></div>
<div class="t" style="left:812.19px;top:245px;font-size:13.5px;color:#1e5631;font-weight:bold;transform:scaleX(1.0893);">F</div>
<div class="a" style="left:878.5px;top:242px;width:1px;height:17px;background:#d9d9d9;"></div>
<div class="t" style="left:978.30px;top:245px;font-size:13.5px;color:#444;">G</div>
<div class="a" style="left:1085.5px;top:242px;width:1px;height:17px;background:#d9d9d9;"></div>
<div class="t" style="left:1141.01px;top:245px;font-size:13.5px;color:#444;">H</div>
<div class="a" style="left:1203.5px;top:242px;width:1px;height:17px;background:#d9d9d9;"></div>
<div class="t" style="left:1269.01px;top:245px;font-size:13.5px;color:#444;">I</div>
<div class="a" style="left:1335.5px;top:242px;width:1px;height:17px;background:#d9d9d9;"></div>
<div class="t" style="left:1434.40px;top:245px;font-size:13.5px;color:#444;">J</div>
<div class="a" style="left:1536.5px;top:242px;width:1px;height:17px;background:#d9d9d9;"></div>
<div class="t" style="left:1579.91px;top:245px;font-size:13.5px;color:#444;">K</div>
<div class="a" style="left:1630.5px;top:242px;width:1px;height:17px;background:#d9d9d9;"></div>
<div class="t" style="left:1663.32px;top:245px;font-size:13.5px;color:#444;">L</div>
<div class="a" style="left:1701.5px;top:242px;width:1px;height:17px;background:#d9d9d9;"></div>
<div class="t" style="left:1731.76px;top:245px;font-size:13.5px;color:#444;">M</div>
<div class="a" style="left:28px;top:242px;width:1px;height:17px;background:#d9d9d9;"></div>
<svg class="a" style="left:13px;top:245px;" width="13" height="12" viewBox="0 0 13 12"><path d="M12 0v11.500H0z" fill="#d4d4d4"/></svg>
<div class="a" style="left:0px;top:259.5px;width:1771px;height:1.5px;background:#b3b3b3;"></div>
<div class="a" style="left:0px;top:261px;width:28px;height:636px;background:#fff;"></div>
<div class="a" style="left:0px;top:261px;width:27px;height:107.5px;background:#e1e1e1;"></div>
<div class="a" style="left:26.5px;top:260px;width:2px;height:109px;background:#1e5631;"></div>
<div class="a" style="left:28px;top:369px;width:1px;height:528px;background:#9a9a9a;"></div>
<div class="t" style="left:10.92px;top:353px;font-size:13.5px;color:#1e5631;font-weight:bold;">1</div>
<div class="t" style="left:11.01px;top:399px;font-size:13.5px;color:#333;transform:scaleX(0.9500);">2</div>
<div class="t" style="left:11.07px;top:449px;font-size:13.5px;color:#333;transform:scaleX(0.9500);">3</div>
<div class="t" style="left:11.07px;top:478px;font-size:13.5px;color:#333;transform:scaleX(0.9500);">4</div>
<div class="t" style="left:11.04px;top:508px;font-size:13.5px;color:#333;transform:scaleX(0.9500);">5</div>
<div class="t" style="left:10.98px;top:538px;font-size:13.5px;color:#333;transform:scaleX(0.9500);">6</div>
<div class="t" style="left:11.01px;top:568px;font-size:13.5px;color:#333;transform:scaleX(0.9500);">7</div>
<div class="t" style="left:11.04px;top:598px;font-size:13.5px;color:#333;transform:scaleX(0.9500);">8</div>
<div class="t" style="left:11.04px;top:628px;font-size:13.5px;color:#333;transform:scaleX(0.9500);">9</div>
<div class="t" style="left:7.23px;top:746px;font-size:13.5px;color:#333;transform:scaleX(0.9500);">10</div>
<div class="t" style="left:7.77px;top:793px;font-size:13.5px;color:#333;transform:scaleX(0.9500);">11</div>
<div class="t" style="left:7.29px;top:824px;font-size:13.5px;color:#333;transform:scaleX(0.9500);">12</div>
<div class="t" style="left:7.26px;top:854px;font-size:13.5px;color:#333;transform:scaleX(0.9500);">13</div>
<div class="t" style="left:7.16px;top:883px;font-size:13.5px;color:#333;transform:scaleX(0.9500);">14</div>
<div class="a" style="left:0px;top:368.5px;width:28px;height:1px;background:#d4d4d4;"></div>
<div class="a" style="left:0px;top:417.5px;width:28px;height:1px;background:#d4d4d4;"></div>
<div class="a" style="left:0px;top:465px;width:28px;height:1px;background:#d4d4d4;"></div>
<div class="a" style="left:0px;top:495px;width:28px;height:1px;background:#d4d4d4;"></div>
<div class="a" style="left:0px;top:525px;width:28px;height:1px;background:#d4d4d4;"></div>
<div class="a" style="left:0px;top:555px;width:28px;height:1px;background:#d4d4d4;"></div>
<div class="a" style="left:0px;top:585px;width:28px;height:1px;background:#d4d4d4;"></div>
<div class="a" style="left:0px;top:615px;width:28px;height:1px;background:#d4d4d4;"></div>
<div class="a" style="left:0px;top:645px;width:28px;height:1px;background:#d4d4d4;"></div>
<div class="a" style="left:0px;top:762px;width:28px;height:1px;background:#d4d4d4;"></div>
<div class="a" style="left:0px;top:810px;width:28px;height:1px;background:#d4d4d4;"></div>
<div class="a" style="left:0px;top:840px;width:28px;height:1px;background:#d4d4d4;"></div>
<div class="a" style="left:0px;top:870px;width:28px;height:1px;background:#d4d4d4;"></div>
<div class="a" style="left:1770.5px;top:260px;width:1.2px;height:637px;background:#a0a0a0;"></div>
<div class="a" style="left:0px;top:896.5px;width:1772px;height:1.2px;background:#a6a6a6;"></div>
<div class="t" style="left:44.54px;top:296px;font-size:41px;color:#2f8b7f;font-weight:bold;transform:scaleX(0.9606);text-shadow:0 0 1.500px rgba(47,139,127,.55);">Home Inventory</div>
<div class="t" style="left:351.71px;top:296px;font-size:41px;color:#2f8b7f;transform:scaleX(0.9727);">Contents List</div>
<div class="t" style="left:944.09px;top:300px;font-size:15px;color:#2c8a7e;transform:scaleX(1.0485);">To add new table rows for inventory items, select the last cell in the table above the</div>
<div class="t" style="left:944.09px;top:320px;font-size:15px;color:#2c8a7e;transform:scaleX(1.0389);">Totals row, such as cell K16, and then press the Tab key. This note will not print.</div>
<svg class="a" style="left:1545px;top:283px;" width="56" height="51" viewBox="0 0 56 51"><path d="M27.700 2.800L2.200 25.200l2.300 2.200 2.500-1.500V48.700h41.900V25.900l2.500 1.500 2.300-2.200-8.100-7.100V6.800h-7.200v5z" fill="#3d9d92" stroke="#2a877b" stroke-width="1.200" stroke-linejoin="round"/><rect x="15" y="25.200" width="11.300" height="21.100" fill="#fff"/><rect x="31.500" y="25.200" width="9.200" height="10.500" fill="#fff"/></svg>
<div class="a" style="left:29px;top:368.5px;width:1602px;height:49px;background:#cbe9e7;"></div>
<div class="a" style="left:752px;top:258.500px;width:128px;height:111.500px;border:2px solid #1b5428"></div>
<div class="a" style="left:874.300px;top:364.500px;width:7.300px;height:7.500px;border:1px solid #fff;background:#1b5428"></div>
<div class="t" style="left:49.50px;top:384px;font-size:21.5px;color:#2c8a7e;font-weight:bold;transform:scaleX(0.9113);">TOTAL ESTIMATED VALUE OF ALL ITEMS:</div>
<div class="t" style="left:510.15px;top:382px;font-size:24.5px;color:#c5100f;font-weight:bold;transform:scaleX(1.0331);">$4,040.00</div>
<div class="t" style="left:904.11px;top:384px;font-size:21.5px;color:#2c8a7e;font-weight:bold;transform:scaleX(0.9250);">INVENTORY DATE:</div>
<div class="t" style="left:1110.99px;top:382px;font-size:24.5px;color:#c5100f;font-weight:bold;transform:scaleX(1.1090);">4/12/2014</div>
<div class="a" style="left:117px;top:465px;width:636.5px;height:58.5px;background:#f2f2f2;"></div>
<div class="a" style="left:117px;top:527.5px;width:636.5px;height:56px;background:#f2f2f2;"></div>
<div class="a" style="left:117px;top:587.5px;width:636.5px;height:56px;background:#f2f2f2;"></div>
<div class="t" style="left:125.98px;top:488px;font-size:16px;color:#2c8a7e;font-weight:bold;transform:scaleX(1.0777);">NAME:</div>
<div class="t" style="left:126.70px;top:548px;font-size:16px;color:#2c8a7e;font-weight:bold;">ADDRESS:</div>
<div class="t" style="left:126.00px;top:608px;font-size:16px;color:#2c8a7e;font-weight:bold;transform:scaleX(1.0607);">PHONE:</div>
<div class="t" style="left:288.55px;top:488px;font-size:17.5px;color:#222;transform:scaleX(0.9499);">Jamie Stark</div>
<div class="t" style="left:287.49px;top:548px;font-size:17.5px;color:#222;">131 Orange Blossom Way, Apt 6</div>
<div class="t" style="left:287.78px;top:608px;font-size:17.5px;color:#222;transform:scaleX(0.9723);">(435) 555-0187</div>
<svg class="a" style="left:58px;top:468px;" width="32" height="45" viewBox="0 0 32 45"><path d="M8.700 10.300C8.200 3.600 12 .800 16 .800s7.800 2.800 7.300 9.500c1.200-.300 1.700.500 1.400 1.900l-.600 2.500c-.300 1-.900 1.400-1.600 1.200c-.900 3.500-3.400 5.600-6.500 5.600s-5.600-2.100-6.500-5.600c-.700.200-1.300-.200-1.600-1.200l-.600-2.500c-.300-1.400.200-2.200 1.400-1.900z" fill="#3a9c90"/><path d="M1.200 41.500V30.500c0-4 2.800-6.300 7.500-7l2.300-.300c2.800 2.300 7.200 2.300 10 0l2.300.300c4.700.700 7.500 3 7.500 7v11c0 1.500-1 2.500-2.500 2.500H3.700c-1.500 0-2.500-1-2.500-2.500z" fill="#3a9c90"/></svg>
<svg class="a" style="left:52px;top:534px;" width="44" height="37" viewBox="0 0 44 37"><path d="M22 .900L40.500 11.300 35.900 15.200H8.100L3.700 11.300z" fill="#3a9c90" stroke="#2f8f83" stroke-width=".800" stroke-linejoin="round"/>
<path d="M9.100 16.400V11.600c0-.900.600-1.500 1.500-1.500H27.200L34.800 15.400v1z" fill="#fff"/><path d="M7.500 15.700h29v1.500h-29z" fill="#fff"/><path d="M26.500 10.200c-.300 4 .300 7 4.800 7.300" fill="none" stroke="#2f8f83" stroke-width="1.400"/>
<path d="M1.200 13.300L13.600 24.200 1.200 34.100z" fill="#3a9c90" stroke="#2f8f83" stroke-width=".800" stroke-linejoin="round"/><path d="M42.800 13.300L30.400 24.200 42.800 34.100z" fill="#3a9c90" stroke="#2f8f83" stroke-width=".800" stroke-linejoin="round"/>
<path d="M3.300 35.600L14.600 25.800l5.200 3.300c1.400.900 3 .900 4.400 0l5.200-3.300L40.700 35.600z" fill="#3a9c90" stroke="#2f8f83" stroke-width=".800" stroke-linejoin="round"/></svg>
<svg class="a" style="left:53px;top:599px;" width="42" height="35" viewBox="0 0 42 35"><path d="M1.400 6.400V4.700c0-2.500 1.500-4 4-4H37c2.500 0 4 1.500 4 4v1.700z" fill="#3a9c90" stroke="#2f8f83" stroke-width=".700"/>
<path d="M1.900 8.100h7.700v.700c0 1.300-.800 2-2 2H3.900c-1.200 0-2-.700-2-2zM32.600 8.100h8.200v.700c0 1.300-.800 2-2 2h-4.200c-1.200 0-2-.700-2-2z" fill="#2f8f83"/>
<path d="M12.100 6.400h18.300v6.400L39 20c1.400 1.200 2 2.400 2 4.200V30c0 2.500-1.500 4.100-4 4.100H5.400c-2.500 0-4-1.600-4-4.100v-5.800c0-1.800.600-3 2-4.200l8.700-7.200z" fill="#3a9c90" stroke="#2f8f83" stroke-width=".700"/>
<rect x="16" y="7.100" width="9.700" height="3" rx=".500" fill="#fff"/><g fill="#fff"><rect x="13.6" y="16.9" width="4" height="2.100" rx=".700"/><rect x="13.6" y="20.6" width="4" height="2.100" rx=".700"/><rect x="13.6" y="24.2" width="4" height="2.100" rx=".700"/><rect x="19" y="16.9" width="4" height="2.100" rx=".700"/><rect x="19" y="20.6" width="4" height="2.100" rx=".700"/><rect x="19" y="24.2" width="4" height="2.100" rx=".700"/><rect x="24.5" y="16.9" width="4" height="2.100" rx=".700"/><rect x="24.5" y="20.6" width="4" height="2.100" rx=".700"/><rect x="24.5" y="24.2" width="4" height="2.100" rx=".700"/></g></svg>
<div class="a" style="left:1086px;top:465px;width:451px;height:29px;background:#f2f2f2;"></div>
<div class="t" style="left:917.05px;top:475px;font-size:16.5px;color:#2c8a7e;font-weight:bold;transform:scaleX(0.9758);">Insurance company:</div>
<div class="t" style="left:1099.01px;top:473px;font-size:17.5px;color:#222;">Humongous Insurance</div>
<div class="a" style="left:1086px;top:496.7px;width:451px;height:27.3px;background:#f2f2f2;"></div>
<div class="t" style="left:863.35px;top:506px;font-size:16.5px;color:#2c8a7e;font-weight:bold;transform:scaleX(0.9800);">Insurance company phone:</div>
<div class="t" style="left:1099.38px;top:503px;font-size:17.5px;color:#222;transform:scaleX(0.9691);">(800) 555-0123</div>
<div class="a" style="left:1086px;top:526.7px;width:451px;height:27.3px;background:#f2f2f2;"></div>
<div class="t" style="left:802.65px;top:536px;font-size:16.5px;color:#2c8a7e;font-weight:bold;transform:scaleX(0.9752);">Insurance company policy number:</div>
<div class="t" style="left:1099.11px;top:533px;font-size:17.5px;color:#222;transform:scaleX(0.9207);">PHO99H4</div>
<div class="a" style="left:1086px;top:556.7px;width:451px;height:27.3px;background:#f2f2f2;"></div>
<div class="t" style="left:943.34px;top:566px;font-size:16.5px;color:#2c8a7e;font-weight:bold;transform:scaleX(0.9865);">Insurance agent:</div>
<div class="t" style="left:1099.03px;top:563px;font-size:17.5px;color:#222;transform:scaleX(0.9808);">Rene Valdes</div>
<div class="a" style="left:1086px;top:586.7px;width:451px;height:27.3px;background:#f2f2f2;"></div>
<div class="t" style="left:890.04px;top:596px;font-size:16.5px;color:#2c8a7e;font-weight:bold;transform:scaleX(0.9865);">Insurance agent phone:</div>
<div class="t" style="left:1099.38px;top:593px;font-size:17.5px;color:#222;transform:scaleX(0.9691);">(800) 555-0156</div>
<div class="a" style="left:1086px;top:616.7px;width:451px;height:27.3px;background:#f2f2f2;"></div>
<div class="t" style="left:878.65px;top:626px;font-size:16.5px;color:#2c8a7e;font-weight:bold;transform:scaleX(0.9750);">Insurance agent address:</div>
<div class="t" style="left:1099.54px;top:623px;font-size:17.5px;color:#222;transform:scaleX(0.9828);">6789 Palm Street, Moline FL 68897</div>
<div class="t" style="left:40.31px;top:661px;font-size:15.5px;color:#333;transform:scaleX(1.0133);">Click a room below to filter your inventory list by the selected room. Hold Ctrl to select multiple rooms.</div>
<div class="a" style="left:40px;top:682.8px;width:1579px;height:1.5px;background:#2f8072;"></div>
<svg class="a" style="left:1596px;top:659px;" width="20" height="19" viewBox="0 0 20 19"><path d="M.300 .900h13.600L8 7.300v5.300H5.200V7.300z" fill="#c9c9c9" stroke="#9a9a9a" stroke-width=".900"/><path d="M8.800 10.200l9 8M17.500 10.700l-8.700 7.700" stroke="#8e8e8e" stroke-width="1.700"/></svg>
<div class="a" style="left:40.0px;top:689.300px;width:259.500px;height:24.700px;background:#fdbe77;border:1px solid #fbab57;border-radius:3.500px"></div>
<div class="t" style="left:50.87px;top:695px;font-size:14.5px;color:#222;transform:scaleX(1.0599);">Dining Room</div>
<div class="a" style="left:303.3px;top:689.300px;width:259.500px;height:24.700px;background:#fdbe77;border:1px solid #fbab57;border-radius:3.500px"></div>
<div class="t" style="left:314.17px;top:695px;font-size:14.5px;color:#222;transform:scaleX(1.0600);">Family Room</div>
<div class="a" style="left:566.7px;top:689.300px;width:259.500px;height:24.700px;background:#fdbe77;border:1px solid #fbab57;border-radius:3.500px"></div>
<div class="t" style="left:577.11px;top:695px;font-size:14.5px;color:#222;transform:scaleX(1.1134);">Home Office</div>
<div class="a" style="left:830.0px;top:689.300px;width:259.500px;height:24.700px;background:#fdbe77;border:1px solid #fbab57;border-radius:3.500px"></div>
<div class="t" style="left:840.67px;top:695px;font-size:14.5px;color:#222;transform:scaleX(1.0635);">Living Room</div>
<div class="a" style="left:29px;top:761px;width:1602px;height:47.5px;background:#3c9d92;"></div>
<div class="a" style="left:29px;top:761px;width:1602px;height:1.5px;background:#1d7f72;"></div>
<div class="a" style="left:29px;top:807.3px;width:1602px;height:1.4px;background:#23867a;"></div>
<div class="a" style="left:94.3px;top:784.500px;width:22px;height:23px;background:#fff;border:1px solid #b5b5b5"></div>
<svg class="a" style="left:101.55px;top:794.25px" width="7.5" height="4.5" viewBox="0 0 7.5 4.5"><path d="M0 0H7.5L3.75 4.5Z" fill="#333"/></svg>
<div class="a" style="left:251.7px;top:784.500px;width:22px;height:23px;background:#fff;border:1px solid #b5b5b5"></div>
<svg class="a" style="left:258.95px;top:794.25px" width="7.5" height="4.5" viewBox="0 0 7.5 4.5"><path d="M0 0H7.5L3.75 4.5Z" fill="#333"/></svg>
<div class="a" style="left:459.3px;top:784.500px;width:22px;height:23px;background:#fff;border:1px solid #b5b5b5"></div>
<svg class="a" style="left:466.55px;top:794.25px" width="7.5" height="4.5" viewBox="0 0 7.5 4.5"><path d="M0 0H7.5L3.75 4.5Z" fill="#333"/></svg>
<div class="a" style="left:611.7px;top:784.500px;width:22px;height:23px;background:#fff;border:1px solid #b5b5b5"></div>
<svg class="a" style="left:618.95px;top:794.25px" width="7.5" height="4.5" viewBox="0 0 7.5 4.5"><path d="M0 0H7.5L3.75 4.5Z" fill="#333"/></svg>
<div class="a" style="left:730.2px;top:784.500px;width:22px;height:23px;background:#fff;border:1px solid #b5b5b5"></div>
<svg class="a" style="left:737.45px;top:794.25px" width="7.5" height="4.5" viewBox="0 0 7.5 4.5"><path d="M0 0H7.5L3.75 4.5Z" fill="#333"/></svg>
<div class="a" style="left:855.2px;top:784.500px;width:22px;height:23px;background:#fff;border:1px solid #b5b5b5"></div>
<svg class="a" style="left:862.45px;top:794.25px" width="7.5" height="4.5" viewBox="0 0 7.5 4.5"><path d="M0 0H7.5L3.75 4.5Z" fill="#333"/></svg>
<div class="a" style="left:1062.7px;top:784.500px;width:22px;height:23px;background:#fff;border:1px solid #b5b5b5"></div>
<svg class="a" style="left:1069.95px;top:794.25px" width="7.5" height="4.5" viewBox="0 0 7.5 4.5"><path d="M0 0H7.5L3.75 4.5Z" fill="#333"/></svg>
<div class="a" style="left:1180.4px;top:784.500px;width:22px;height:23px;background:#fff;border:1px solid #b5b5b5"></div>
<svg class="a" style="left:1187.65px;top:794.25px" width="7.5" height="4.5" viewBox="0 0 7.5 4.5"><path d="M0 0H7.5L3.75 4.5Z" fill="#333"/></svg>
<div class="a" style="left:1312.3px;top:784.500px;width:22px;height:23px;background:#fff;border:1px solid #b5b5b5"></div>
<svg class="a" style="left:1319.55px;top:794.25px" width="7.5" height="4.5" viewBox="0 0 7.5 4.5"><path d="M0 0H7.5L3.75 4.5Z" fill="#333"/></svg>
<div class="a" style="left:1513.0px;top:784.500px;width:22px;height:23px;background:#fff;border:1px solid #b5b5b5"></div>
<svg class="a" style="left:1520.25px;top:794.25px" width="7.5" height="4.5" viewBox="0 0 7.5 4.5"><path d="M0 0H7.5L3.75 4.5Z" fill="#333"/></svg>
<div class="a" style="left:1607.5px;top:784.500px;width:22px;height:23px;background:#fff;border:1px solid #b5b5b5"></div>
<svg class="a" style="left:1614.75px;top:794.25px" width="7.5" height="4.5" viewBox="0 0 7.5 4.5"><path d="M0 0H7.5L3.75 4.5Z" fill="#333"/></svg>
<div class="t" style="left:48.30px;top:779px;font-size:15.5px;color:#fff;font-weight:bold;transform:scaleX(1.0932);">Item #</div>
<div class="t" style="left:120.07px;top:768px;font-size:15.5px;color:#fff;font-weight:bold;transform:scaleX(1.0250);">Room/</div>
<div class="t" style="left:120.73px;top:789px;font-size:15.5px;color:#fff;font-weight:bold;transform:scaleX(0.9583);">area</div>
<div class="t" style="left:277.62px;top:768px;font-size:15.5px;color:#fff;font-weight:bold;transform:scaleX(1.0762);">Item/</div>
<div class="t" style="left:278.10px;top:789px;font-size:15.5px;color:#fff;font-weight:bold;transform:scaleX(0.9757);">description</div>
<div class="t" style="left:485.34px;top:768px;font-size:15.5px;color:#fff;font-weight:bold;transform:scaleX(1.0494);">Make/</div>
<div class="t" style="left:485.34px;top:789px;font-size:15.5px;color:#fff;font-weight:bold;transform:scaleX(1.0492);">model</div>
<div class="t" style="left:638.32px;top:768px;font-size:15.5px;color:#fff;font-weight:bold;transform:scaleX(0.9796);">Serial number/</div>
<div class="t" style="left:637.69px;top:789px;font-size:15.5px;color:#fff;font-weight:bold;">ID number</div>
<div class="t" style="left:756.62px;top:768px;font-size:15.5px;color:#fff;font-weight:bold;transform:scaleX(1.0722);">Date</div>
<div class="t" style="left:756.72px;top:789px;font-size:15.5px;color:#fff;font-weight:bold;transform:scaleX(0.9746);">purchased</div>
<div class="t" style="left:882.70px;top:779px;font-size:15.5px;color:#fff;font-weight:bold;transform:scaleX(0.9641);">Where purchased</div>
<div class="t" style="left:1089.43px;top:768px;font-size:15.5px;color:#fff;font-weight:bold;transform:scaleX(0.9622);">Purchase</div>
<div class="t" style="left:1092.74px;top:789px;font-size:15.5px;color:#fff;font-weight:bold;transform:scaleX(0.9558);">price</div>
<div class="t" style="left:1206.77px;top:768px;font-size:15.5px;color:#fff;font-weight:bold;transform:scaleX(1.0184);">Estimated</div>
<div class="t" style="left:1207.27px;top:789px;font-size:15.5px;color:#fff;font-weight:bold;transform:scaleX(0.9841);">current value</div>
<div class="t" style="left:1338.96px;top:779px;font-size:15.5px;color:#fff;font-weight:bold;transform:scaleX(1.0371);">Notes</div>
<div class="t" style="left:1549.80px;top:779px;font-size:15.5px;color:#fff;font-weight:bold;">Photo?</div>
<div class="a" style="left:29px;top:808.7px;width:1602px;height:31.3px;background:#f2f2f2;"></div>
<div class="a" style="left:29px;top:870px;width:1602px;height:26.5px;background:#f2f2f2;"></div>
<div class="a" style="left:1205px;top:811px;width:129.3px;height:26.5px;background:linear-gradient(90deg,#f98f1d 0%,#fbb265 35%,#fdd9b3 75%,#fee9d3 100%);border-left:1px solid #f58a1a"></div>
<div class="a" style="left:1205px;top:841.3px;width:64.7px;height:25.7px;background:linear-gradient(90deg,#f98f1d 0%,#fbb265 35%,#fdd9b3 75%,#fee9d3 100%);border-left:1px solid #f58a1a"></div>
<div class="a" style="left:1205px;top:871.3px;width:35.6px;height:25.2px;background:linear-gradient(90deg,#f98f1d 0%,#fbb265 35%,#fdd9b3 75%,#fee9d3 100%);border-left:1px solid #f58a1a"></div>
<div class="t" style="left:70.07px;top:819px;font-size:14.5px;color:#222;transform:scaleX(0.7134);">1</div>
<div class="t" style="left:119.32px;top:819px;font-size:14.5px;color:#222;transform:scaleX(0.9335);">Living Room</div>
<div class="t" style="left:276.42px;top:819px;font-size:14.5px;color:#222;transform:scaleX(0.9830);">Item 1</div>
<div class="t" style="left:484.27px;top:819px;font-size:14.5px;color:#222;transform:scaleX(0.9749);">Manufacturer 1</div>
<div class="t" style="left:665.95px;top:819px;font-size:14.5px;color:#222;transform:scaleX(0.8885);">33XCBH3</div>
<div class="t" style="left:787.51px;top:819px;font-size:14.5px;color:#222;transform:scaleX(1.0178);">5/2/2010</div>
<div class="t" style="left:880.46px;top:819px;font-size:14.5px;color:#222;transform:scaleX(0.9835);">Online</div>
<div class="t" style="left:1130.96px;top:819px;font-size:14.5px;color:#222;transform:scaleX(0.9441);">$2,000.00</div>
<div class="t" style="left:1258.76px;top:818px;font-size:14.5px;color:#222;transform:scaleX(0.9409);">$2,000.00</div>
<div class="t" style="left:1572.12px;top:819px;font-size:14.5px;color:#222;transform:scaleX(0.9546);">Yes</div>
<div class="t" style="left:69.14px;top:849px;font-size:14.5px;color:#222;transform:scaleX(0.9745);">2</div>
<div class="t" style="left:119.27px;top:849px;font-size:14.5px;color:#222;transform:scaleX(0.9734);">Home Office</div>
<div class="t" style="left:276.42px;top:849px;font-size:14.5px;color:#222;transform:scaleX(0.9830);">Item 2</div>
<div class="t" style="left:484.27px;top:849px;font-size:14.5px;color:#222;transform:scaleX(0.9749);">Manufacturer 2</div>
<div class="t" style="left:668.85px;top:849px;font-size:14.5px;color:#222;transform:scaleX(0.9401);">55-678B</div>
<div class="t" style="left:783.59px;top:849px;font-size:14.5px;color:#222;transform:scaleX(1.0252);">11/6/2010</div>
<div class="t" style="left:880.43px;top:849px;font-size:14.5px;color:#222;transform:scaleX(0.9232);">Computer Store</div>
<div class="t" style="left:1130.96px;top:849px;font-size:14.5px;color:#222;transform:scaleX(0.9441);">$1,500.00</div>
<div class="t" style="left:1258.76px;top:848px;font-size:14.5px;color:#222;transform:scaleX(0.9409);">$1,000.00</div>
<div class="t" style="left:1574.86px;top:849px;font-size:14.5px;color:#222;transform:scaleX(0.9793);">No</div>
<div class="t" style="left:69.38px;top:879px;font-size:14.5px;color:#222;transform:scaleX(0.9339);">3</div>
<div class="t" style="left:119.32px;top:879px;font-size:14.5px;color:#222;transform:scaleX(0.9335);">Living Room</div>
<div class="t" style="left:276.42px;top:879px;font-size:14.5px;color:#222;transform:scaleX(0.9811);">Item 3</div>
<div class="t" style="left:484.27px;top:879px;font-size:14.5px;color:#222;transform:scaleX(0.9742);">Manufacturer 3</div>
<div class="t" style="left:664.09px;top:879px;font-size:14.5px;color:#222;transform:scaleX(0.8480);">7865SS-J3</div>
<div class="t" style="left:784.18px;top:879px;font-size:14.5px;color:#222;transform:scaleX(1.0180);">3/15/2011</div>
<div class="t" style="left:879.99px;top:879px;font-size:14.5px;color:#222;transform:scaleX(0.9545);">Furniture store</div>
<div class="t" style="left:1141.96px;top:879px;font-size:14.5px;color:#222;transform:scaleX(0.9524);">$560.00</div>
<div class="t" style="left:1269.96px;top:878px;font-size:14.5px;color:#222;transform:scaleX(0.9447);">$550.00</div>
<div class="t" style="left:1574.86px;top:879px;font-size:14.5px;color:#222;transform:scaleX(0.9793);">No</div>
<div class="a" style="left:1772px;top:241px;width:27px;height:656px;background:#fff;"></div>
<div class="a" style="left:1773px;top:265px;width:23.5px;height:632px;background:#f0f0f0;"></div>
<div class="a" style="left:1773px;top:242px;width:23.5px;height:22.5px;background:#fff;border:1px solid #ababab"></div>
<svg class="a" style="left:1779px;top:250px;" width="12" height="7" viewBox="0 0 12 7"><path d="M0 6.500h11.500L5.700 0z" fill="#555"/></svg>
<div class="a" style="left:1773px;top:264.8px;width:23.5px;height:518.7px;background:#fff;border:1px solid #ababab"></div>
<div class="a" style="left:1773px;top:875.5px;width:23.5px;height:21.5px;background:#fff;border:1px solid #ababab"></div>
<svg class="a" style="left:1779px;top:883px;" width="12" height="7" viewBox="0 0 12 7"><path d="M0 0h11.500L5.700 6.500z" fill="#555"/></svg>
<div class="a" style="left:0px;top:897.7px;width:1799px;height:31.3px;background:#f3f3f3;"></div>
<svg class="a" style="left:26px;top:905px;" width="8" height="14" viewBox="0 0 8 14"><path d="M7 1v12L1 7z" fill="#c3c3c3"/></svg>
<svg class="a" style="left:58px;top:905px;" width="8" height="14" viewBox="0 0 8 14"><path d="M1 1v12l6-6z" fill="#c3c3c3"/></svg>
<div class="a" style="left:111px;top:897.500px;width:287px;height:28.500px;background:linear-gradient(180deg,#fff 0%,#f6fbf9 35%,#c9e3db 100%);border-left:1px solid #c9c9c9;border-right:1px solid #c9c9c9;border-bottom:2px solid #1e6b3e"></div>
<div class="t" style="left:121.89px;top:902px;font-size:19.5px;color:#1e5631;font-weight:bold;transform:scaleX(0.9542);text-shadow:0 0 2px #fff;">Home Contents Inventory List</div>
<div class="a" style="left:400px;top:899.800px;width:139px;height:26px;background:linear-gradient(180deg,#fb9a27 0%,#f7921c 70%,#f28a14 100%)"></div>
<div class="t" style="left:411.60px;top:902px;font-size:19.5px;color:#3a2608;transform:scaleX(0.9618);">Room Lookup</div>
<div class="a" style="left:540.5px;top:900px;width:1px;height:26px;background:#c6c6c6;"></div>
<svg class="a" style="left:577px;top:901px;" width="23" height="23" viewBox="0 0 23 23"><circle cx="11.500" cy="11.500" r="9.800" fill="none" stroke="#444" stroke-width="1.400"/><path d="M11.500 6.500v10M6.500 11.500h10" stroke="#444" stroke-width="1.500"/></svg>
<div class="a" style="left:1076.5px;top:908px;width:1.6px;height:1.6px;background:#888;"></div>
<div class="a" style="left:1076.5px;top:912px;width:1.6px;height:1.6px;background:#888;"></div>
<div class="a" style="left:1076.5px;top:916px;width:1.6px;height:1.6px;background:#888;"></div>
<div class="a" style="left:1118px;top:901.7px;width:631px;height:22px;background:#f0f0f0;"></div>
<div class="a" style="left:1095px;top:901.5px;width:23px;height:22.5px;background:#fff;border:1px solid #ababab"></div>
<svg class="a" style="left:1102px;top:907px;" width="8" height="12" viewBox="0 0 8 12"><path d="M7 0v11.500L0 5.700z" fill="#333"/></svg>
<div class="a" style="left:1117.5px;top:901.5px;width:584.5px;height:22.5px;background:#fff;border:1px solid #ababab"></div>
<div class="a" style="left:1748.5px;top:901.5px;width:23px;height:22.5px;background:#fff;border:1px solid #ababab"></div>
<svg class="a" style="left:1757px;top:907px;" width="8" height="12" viewBox="0 0 8 12"><path d="M0 0v11.500L7 5.700z" fill="#333"/></svg>
<div class="a" style="left:0px;top:928.7px;width:1799px;height:31px;background:#217346;"></div>
<div class="t" style="left:6.35px;top:936px;font-size:15px;color:#fff;transform:scaleX(0.8749);">READY</div>
<div class="a" style="left:1433px;top:928.7px;width:41.6px;height:31px;background:#195e39;"></div>
<svg class="a" style="left:1444px;top:934.5px;" width="20" height="20" viewBox="0 0 20 20"><rect x=".800" y=".800" width="18" height="18" fill="none" stroke="#fff" stroke-width="1.200"/><path d="M7 .800v18M13 .800v18M.800 7h18M.800 13h18" stroke="#fff" stroke-width="1.100"/></svg>
<svg class="a" style="left:1486px;top:934.5px;" width="20" height="20" viewBox="0 0 20 20"><rect x=".800" y=".800" width="18" height="18" fill="none" stroke="#fff" stroke-width="1.400"/><rect x="5.500" y="5" width="8.500" height="10" fill="none" stroke="#fff" stroke-width="1.200"/><path d="M7.500 8h4.500M7.500 10.500h4.500M7.500 13h4.500" stroke="#fff" stroke-width="1"/></svg>
<svg class="a" style="left:1528px;top:934.5px;" width="20" height="20" viewBox="0 0 20 20"><rect x=".800" y=".800" width="17.500" height="18" fill="none" stroke="#fff" stroke-width="1.400"/><path d="M4 .800h5v9H4zM11 .800h7v9h-7z" fill="#fff"/></svg>
<div class="a" style="left:1565px;top:942.8px;width:10.5px;height:2.6px;background:#fff;"></div>
<div class="a" style="left:1580.8px;top:943.5px;width:139.5px;height:1.2px;background:#b9d6c5;"></div>
<div class="a" style="left:1640.3px;top:935.8px;width:6px;height:16.6px;background:#fff;"></div>
<div class="a" style="left:1649.8px;top:939px;width:1.2px;height:10px;background:#b9d6c5;"></div>
<div class="a" style="left:1725.3px;top:942.8px;width:12.5px;height:2.6px;background:#fff;"></div>
<div class="a" style="left:1730.3px;top:937.8px;width:2.6px;height:12.5px;background:#fff;"></div>
<div class="t" style="left:1753.34px;top:936px;font-size:15px;color:#fff;transform:scaleX(0.9826);">90%</div>
<div class="a" style="left:0;top:959.500px;width:1799px;height:11px;background:linear-gradient(90deg,#2ebccd 0%,#33c0c6 12%,#3fc4b8 22%,#4cc1b5 32.500%,#4b95d3 34%,#4c90d4 42%,#5a9cd8 43.500%,#62a8dc 55%,#5fa6dd 57%,#5ca3dc 69%,#4d78d6 71%,#4a66d2 73%,#4759cb 100%)"></div>
<svg class="a" style="left:0px;top:959px;" width="1400" height="11" viewBox="0 0 1400 11"><path d="M11 11L53 6.500V11z" fill="#eef6f6"/><path d="M85 6h30l9 1.500V11H85z" fill="#efd48a"/><path d="M89 5h10v2H89z" fill="#d0463a"/><path d="M162 3.500h44V11h-44z" fill="#a8566c"/><path d="M166 5l30 6h-30z" fill="#c4283c"/><path d="M254 8h18v3h-18z" fill="#e2b84a"/><path d="M327 11c3-5.500 23-5.500 27 0z" fill="#d9412c"/><path d="M402 11l21-4.500V11z" fill="#2b58b8"/>
<path d="M125 0l-3 3M310 0l12 5 6-5" stroke="#5fd0c4" stroke-width="1" fill="none"/>
<rect x="460.500" y="1" width="71" height="11" fill="#8fd2c6" stroke="#c9ece5" stroke-width="1"/><path d="M480 11l20-5v5z" fill="#1f7a48"/><rect x="536.500" y="1" width="55" height="11" fill="#55c3b6" stroke="#8edbd0" stroke-width="1"/><path d="M559 11l22-5.500V11z" fill="#d23a2a"/>
<rect x="618.500" y="1" width="75" height="11" fill="#5c9fd3" stroke="#c4506a" stroke-width="1.200"/><path d="M640 11c3-8 24-8 27.500 0z" fill="#f4f4f4"/><path d="M745 11c1-4 4-6.500 9-6.500l1.500 6.500z" fill="#e9a84c"/>
<rect x="776.500" y="1" width="73.500" height="11" fill="#69acd9" stroke="#96c9e6" stroke-width="1"/><path d="M800 11c4-7.500 20-7.500 24.500 0z" fill="#37a2ea"/><rect x="855.500" y="1" width="74" height="11" fill="#74b1da" stroke="#a0cde8" stroke-width="1"/><path d="M880 11l3-4 3 4z" fill="#e6d37a"/><rect x="934" y="1" width="74" height="11" fill="#78b2da" stroke="#a5cfe9" stroke-width="1"/><path d="M954 11l20.500-5V11z" fill="#2b60c8"/>
<path d="M1050 0l22 11M1255 0l-30 11M1340 0l-40 11" stroke="#7fb6e6" stroke-width="1.200" fill="none" opacity=".600"/></svg>
</body>
</html>
